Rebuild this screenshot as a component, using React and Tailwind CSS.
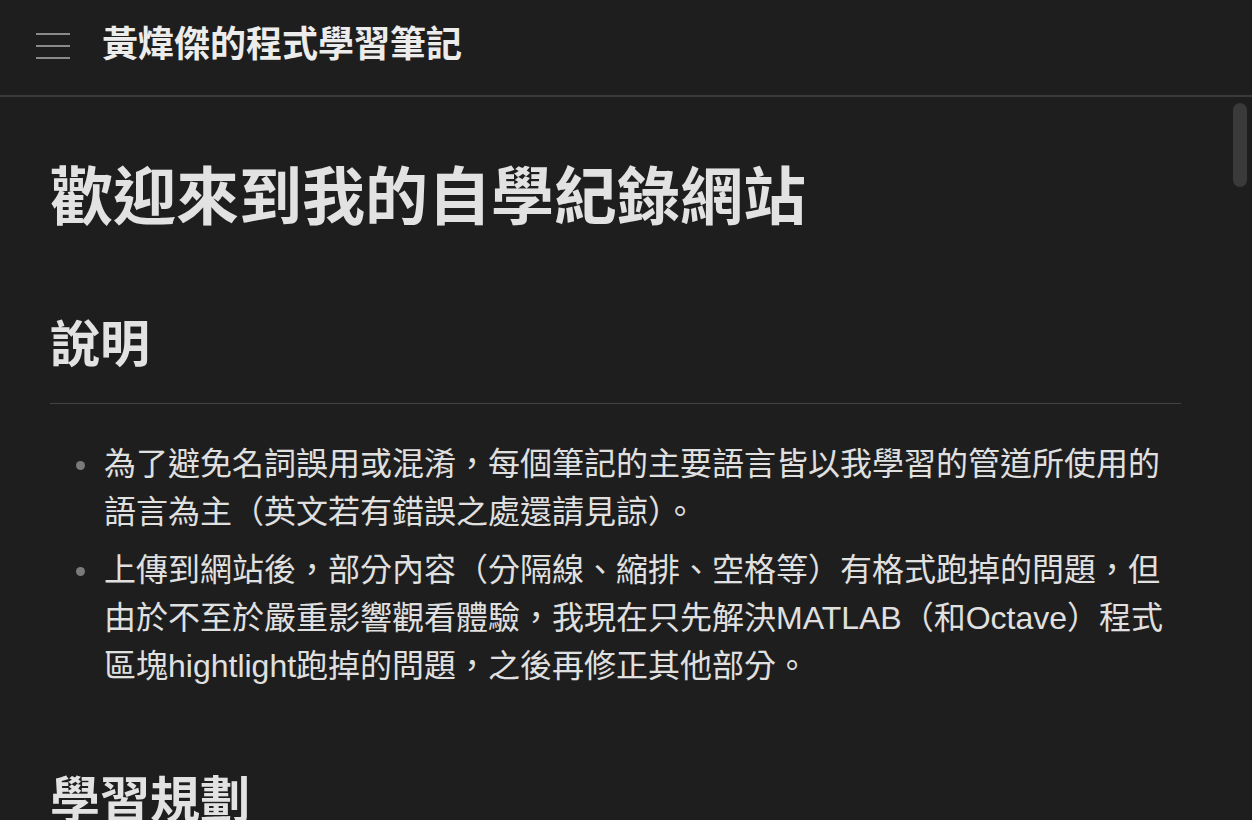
import React from 'react';

const font = { fontFamily: '"Liberation Sans", "Noto Sans CJK TC", sans-serif' };

const notes = [
  '為了避免名詞誤用或混淆，每個筆記的主要語言皆以我學習的管道所使用的語言為主（英文若有錯誤之處還請見諒）。',
  '上傳到網站後，部分內容（分隔線、縮排、空格等）有格式跑掉的問題，但由於不至於嚴重影響觀看體驗，我現在只先解決MATLAB（和Octave）程式區塊hightlight跑掉的問題，之後再修正其他部分。',
];

const App = () => {
  return (
    <div
      className="h-[820px] w-[1252px] overflow-hidden bg-[#1e1e1e] text-[#e0e0e0] flex flex-col"
      style={font}
    >
      <header className="h-[97px] shrink-0 flex items-center border-b-2 border-[#3a3a3a] pl-[36px]">
        <div className="flex flex-col gap-[10px] w-[34px] -mt-[4px]">
          <span className="block h-[2px] bg-[#8a8a8a]" />
          <span className="block h-[2px] bg-[#8a8a8a]" />
          <span className="block h-[2px] bg-[#8a8a8a]" />
        </div>
        <h1 className="ml-[32px] text-[36px] leading-[40px] font-bold text-[#ececec] -mt-[6px]">
          黃煒傑的程式學習筆記
        </h1>
      </header>

      <main className="relative flex-1 overflow-hidden">
        <div className="absolute right-[5px] top-[6px] w-[14px] h-[84px] rounded-full bg-[#3a3a3a]" />

        <div className="pl-[50px] pr-[71px] pt-[60px]">
          <h1 className="text-[63px] leading-[80px] font-bold text-[#e2e2e2]">
            歡迎來到我的自學紀錄網站
          </h1>

          <h2 className="mt-[78px] text-[50px] leading-[60px] font-bold text-[#e2e2e2] pb-[28px] border-b border-[#444]">
            說明
          </h2>

          <ul className="mt-[36px] flex flex-col gap-[10px]">
            {notes.map((t, i) => (
              <li key={i} className="flex text-[32px] leading-[48px]">
                <span className="w-[54px] shrink-0 flex justify-end pr-[19px] pt-[21px]">
                  <span className="block w-[9px] h-[9px] rounded-full bg-[#7a7a7a]" />
                </span>
                <span>{t}</span>
              </li>
            ))}
          </ul>

          <h2 className="mt-[81px] text-[50px] leading-[60px] font-bold text-[#e2e2e2]">
            學習規劃
          </h2>
        </div>
      </main>
    </div>
  );
};

export default App;
